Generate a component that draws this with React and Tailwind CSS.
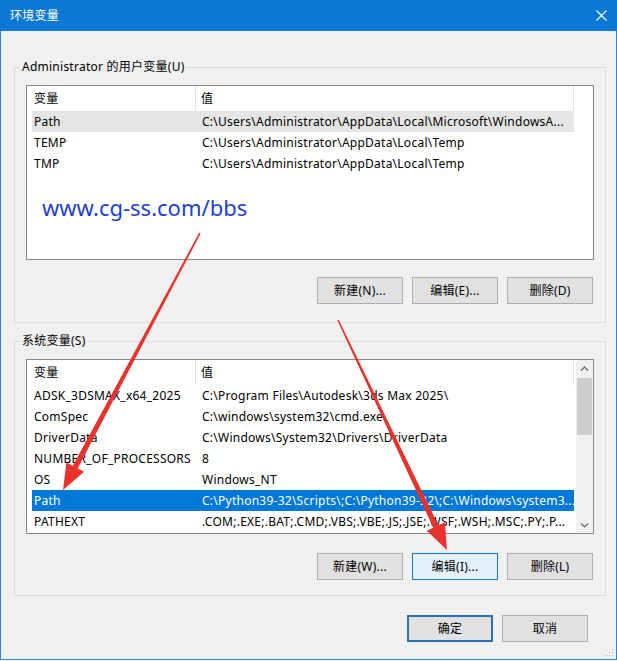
import React from 'react';

const userVars = [
  { name: 'Path', value: 'C:\\Users\\Administrator\\AppData\\Local\\Microsoft\\WindowsA...', sel: 'gray' },
  { name: 'TEMP', value: 'C:\\Users\\Administrator\\AppData\\Local\\Temp' },
  { name: 'TMP', value: 'C:\\Users\\Administrator\\AppData\\Local\\Temp' },
];

const sysVars = [
  { name: 'ADSK_3DSMAX_x64_2025', value: 'C:\\Program Files\\Autodesk\\3ds Max 2025\\' },
  { name: 'ComSpec', value: 'C:\\windows\\system32\\cmd.exe' },
  { name: 'DriverData', value: 'C:\\Windows\\System32\\Drivers\\DriverData' },
  { name: 'NUMBER_OF_PROCESSORS', value: '8' },
  { name: 'OS', value: 'Windows_NT' },
  { name: 'Path', value: 'C:\\Python39-32\\Scripts\\;C:\\Python39-32\\;C:\\Windows\\system3...', sel: 'blue' },
  { name: 'PATHEXT', value: '.COM;.EXE;.BAT;.CMD;.VBS;.VBE;.JS;.JSE;.WSF;.WSH;.MSC;.PY;.P...' },
];

const Chevron = ({ down }) => (
  <svg width="9" height="6" viewBox="0 0 9 6">
    <path d={down ? 'M1 1.5 L4.5 5 L8 1.5' : 'M1 4.5 L4.5 1 L8 4.5'} fill="none" stroke="#606060" strokeWidth="1.2" />
  </svg>
);

const Scrollbar = () => (
  <div className="w-[17px] bg-[#f0f0f0] flex flex-col items-center">
    <div className="h-[17px] flex items-center justify-center"><Chevron /></div>
    <div className="w-[15px] h-[57px] mt-[1px] bg-[#cdcdcd]"></div>
    <div className="flex-1"></div>
    <div className="h-[17px] flex items-center justify-center"><Chevron down /></div>
  </div>
);

const ListBox = ({ rows, scroll }) => (
  <div className="h-[175px] border border-[#828790] bg-white flex overflow-hidden">
    <div className="flex-1 min-w-0 flex flex-col">
      <div className="h-[25px] ml-[5px] w-[542px] flex shrink-0">
        <div className="w-[164px] pl-[2px] flex items-center border-r border-[#e5e5e5]">变量</div>
        <div className="flex-1 pl-[5px] flex items-center border-r border-[#e5e5e5]">值</div>
      </div>
      {rows.map((r) => {
        const sel =
          r.sel === 'blue' ? 'bg-[#0078d7] text-white' : r.sel === 'gray' ? 'bg-[#e5e5e5]' : '';
        return (
          <div key={r.name} className={`h-[21px] ml-[5px] w-[542px] flex items-center whitespace-nowrap shrink-0 ${sel}`}>
            <div className="w-[164px] pl-[2px] overflow-hidden">{r.name}</div>
            <div className="flex-1 pl-[6px] overflow-hidden">{r.value}</div>
          </div>
        );
      })}
    </div>
    {scroll && <Scrollbar />}
  </div>
);

const Btn = ({ children, variant }) => {
  const look =
    variant === 'hover'
      ? 'border border-[#0078d7] bg-[#e5f1fb]'
      : variant === 'default'
      ? 'border-2 border-[#2a71b0] bg-[#e1e1e1]'
      : 'border border-[#adadad] bg-[#e1e1e1]';
  return (
    <div className={`w-[86px] h-[27px] flex items-center justify-center ${look}`}>{children}</div>
  );
};

export default function App() {
  return (
    <div className="relative w-[617px] h-[660px] bg-[#f0f0f0] border-x border-b border-[#2b84d2] flex flex-col text-[12px] leading-[16px] tracking-[0.25px] text-black font-['Noto_Sans','Noto_Sans_CJK_SC',sans-serif]">
      {/* title bar */}
      <div className="h-[31px] -mx-px bg-[#0b78d6] flex items-center justify-between pl-[10px] pr-[10px] text-white shrink-0">
        <span>环境变量</span>
        <svg width="11" height="11" viewBox="0 0 11 11">
          <path d="M0.5 0.5 L10.5 10.5 M10.5 0.5 L0.5 10.5" stroke="#fff" strokeWidth="1.1" />
        </svg>
      </div>

      <div className="flex flex-col pl-[13px] pr-[10px] pt-[28px]">
        <fieldset className="border border-[#dcdcdc] px-[11px] pb-[18px]">
          <legend className="ml-[-6px] px-[2px] leading-[16px]">Administrator 的用户变量(U)</legend>
          <div className="mt-[10px]">
            <ListBox rows={userVars} />
          </div>
          <div className="mt-[17px] pr-[1px] flex justify-end gap-[9px]">
            <Btn>新建(N)...</Btn>
            <Btn>编辑(E)...</Btn>
            <Btn>删除(D)</Btn>
          </div>
        </fieldset>

        <fieldset className="mt-[10px] border border-[#dcdcdc] px-[11px] pb-[15px]">
          <legend className="ml-[-6px] px-[2px] leading-[16px]">系统变量(S)</legend>
          <div className="mt-[10px]">
            <ListBox rows={sysVars} scroll />
          </div>
          <div className="mt-[19px] pr-[1px] flex justify-end gap-[9px]">
            <Btn>新建(W)...</Btn>
            <Btn variant="hover">编辑(I)...</Btn>
            <Btn>删除(L)</Btn>
          </div>
        </fieldset>

        <div className="mt-[19px] pr-[18px] flex justify-end gap-[9px]">
          <Btn variant="default">确定</Btn>
          <Btn>取消</Btn>
        </div>
      </div>

      {/* watermark */}
      <div className="absolute left-[41px] top-[196px] text-[22px] leading-none tracking-normal text-[#1d3fd2] whitespace-nowrap">
        www.cg-ss.com/bbs
      </div>

      {/* red annotation arrows */}
      <svg className="absolute left-[-1px] top-0 pointer-events-none" width="617" height="661" viewBox="0 0 617 661">
        <polygon
          fill="#e8332c"
          points="200.7,233.4 77.7,468.4 84.1,471.8 63,490 66.4,462.4 72.8,465.7 199.3,232.6"
        />
        <polygon
          fill="#e8332c"
          points="338.7,319.7 438.4,525.3 444.9,522.2 447,550 426.8,530.8 433.3,527.7 337.3,320.3"
        />
      </svg>

      {/* resize grip */}
      <svg className="absolute right-[2px] bottom-[2px]" width="8" height="8" viewBox="0 0 8 8">
        <rect x="6" y="0" width="1" height="1" fill="#b0b0b0" />
        <rect x="3" y="3" width="1" height="1" fill="#b0b0b0" />
        <rect x="6" y="3" width="1" height="1" fill="#b0b0b0" />
        <rect x="0" y="6" width="1" height="1" fill="#b0b0b0" />
        <rect x="3" y="6" width="1" height="1" fill="#b0b0b0" />
        <rect x="6" y="6" width="1" height="1" fill="#b0b0b0" />
      </svg>
    </div>
  );
}
